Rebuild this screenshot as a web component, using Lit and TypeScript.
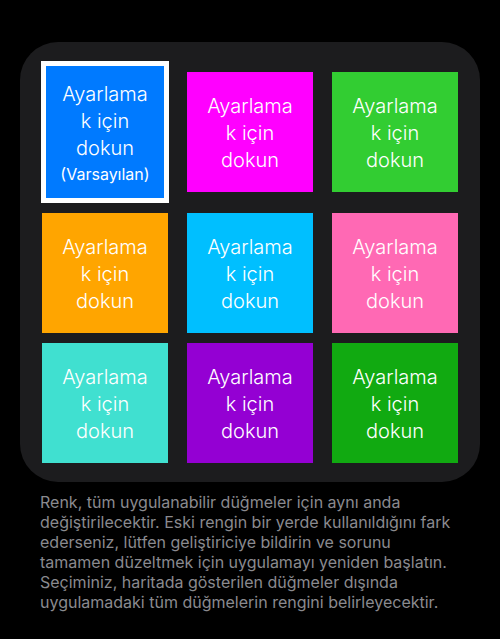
import { LitElement, html, css, nothing } from "lit";
import { customElement, state } from "lit/decorators.js";
import { classMap } from "lit/directives/class-map.js";
import { styleMap } from "lit/directives/style-map.js";

const COLORS = [
  "#007aff",
  "#ff00ff",
  "#32cd32",
  "#ffa500",
  "#00bfff",
  "#ff69b4",
  "#40e0d0",
  "#9400d3",
  "#11aa11",
];

@customElement("app-root")
export class AppRoot extends LitElement {
  static styles = css`
    :host {
      display: block;
      box-sizing: border-box;
      min-height: 100vh;
      padding: 42px 20px 24px;
      background: #000;
      font-family: Inter, "Liberation Sans", sans-serif;
    }
    .panel {
      display: grid;
      grid-template-columns: repeat(3, minmax(0, 1fr));
      align-items: center;
      gap: 10px 19px;
      padding: 19px 22px;
      border-radius: 38px;
      background: #1c1c1e;
    }
    .tile {
      box-sizing: border-box;
      min-height: 120px;
      margin: 0;
      padding: 18px 16px 16px;
      border: 0;
      border-radius: 0;
      color: #fff;
      font: 300 20px/27px Inter, "Liberation Sans", sans-serif;
      text-align: center;
      overflow-wrap: anywhere;
      cursor: pointer;
    }
    .selected {
      margin: 0 -1px;
      padding: 15px 12px 14px;
      border: 5px solid #fff;
    }
    .label {
      display: block;
    }
    .tag {
      display: block;
      margin: 2px -8px 0;
      font-size: 16px;
      font-weight: 400;
      line-height: 20px;
    }
    .note {
      margin: 0;
      padding: 10px 20px 0;
      color: #8a8a8f;
      font-size: 16px;
      line-height: 20px;
    }
  `;

  @state() private selected = 0;

  render() {
    return html`
      <main>
        <div class="panel">
          ${COLORS.map(
            (color, i) => html`
              <button
                type="button"
                class=${classMap({ tile: true, selected: i === this.selected })}
                style=${styleMap({ backgroundColor: color })}
                aria-pressed=${i === this.selected ? "true" : "false"}
                @click=${() => (this.selected = i)}
              >
                <span class="label">Ayarlamak için dokun</span>
                ${i === 0 ? html`<span class="tag">(Varsayılan)</span>` : nothing}
              </button>
            `
          )}
        </div>
        <p class="note">
          Renk, tüm uygulanabilir düğmeler için aynı anda değiştirilecektir. Eski
          rengin bir yerde kullanıldığını fark ederseniz, lütfen geliştiriciye
          bildirin ve sorunu tamamen düzeltmek için uygulamayı yeniden başlatın.
          Seçiminiz, haritada gösterilen düğmeler dışında uygulamadaki tüm
          düğmelerin rengini belirleyecektir.
        </p>
      </main>
    `;
  }
}
